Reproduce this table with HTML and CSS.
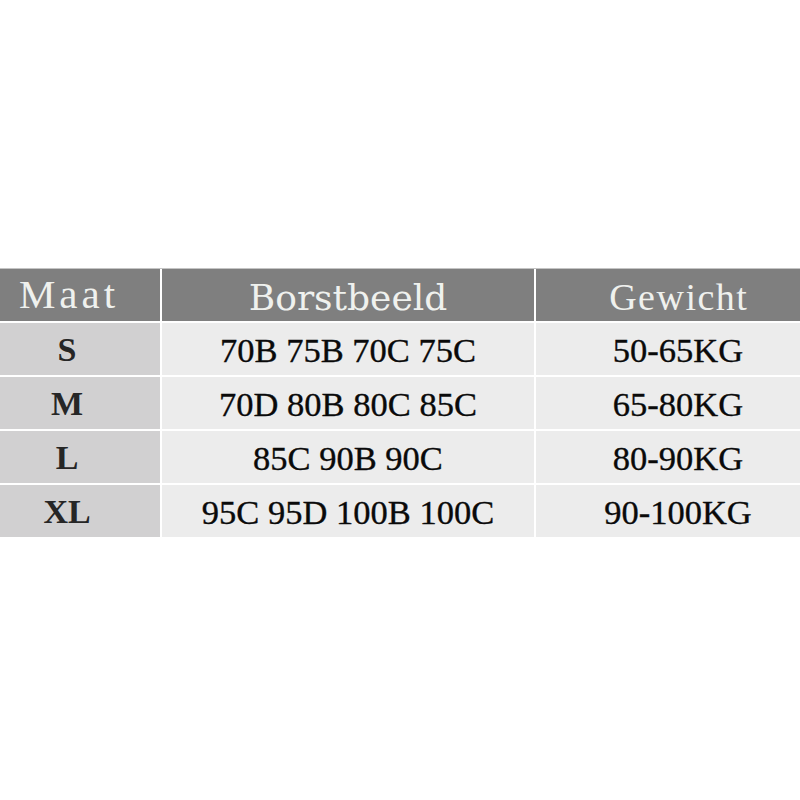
FILE: index.html
```html
<!DOCTYPE html>
<html>
<head>
<meta charset="utf-8">
<link rel="stylesheet" href="styles.css">
</head>
<body>
<div class="page">
  <div class="table">
    <div class="cell head c1"><span class="maat">Maat</span></div>
    <div class="cell head c2"><span class="borst">Borstbeeld</span></div>
    <div class="cell head c3"><span class="gew">Gewicht</span></div>

    <div class="cell size c1">S</div>
    <div class="cell body c2">70B 75B 70C 75C</div>
    <div class="cell body c3">50-65KG</div>

    <div class="cell size c1">M</div>
    <div class="cell body c2">70D 80B 80C 85C</div>
    <div class="cell body c3">65-80KG</div>

    <div class="cell size c1">L</div>
    <div class="cell body c2">85C 90B 90C</div>
    <div class="cell body c3">80-90KG</div>

    <div class="cell size c1">XL</div>
    <div class="cell body c2">95C 95D 100B 100C</div>
    <div class="cell body c3">90-100KG</div>
  </div>
</div>
</body>
</html>
```

FILE: styles.css
```css
html, body {
  margin: 0;
  padding: 0;
  background: #ffffff;
}
.page {
  width: 800px;
  height: 800px;
  padding-top: 268px;
  box-sizing: border-box;
  overflow: hidden;
}
.table {
  display: grid;
  grid-template-columns: 160px 372px 264px;
  grid-template-rows: 52px 52px 52px 52px 52px;
  column-gap: 2px;
  row-gap: 2px;
  border-top: 1px solid #c4c4c4;
  background: #ffffff;
}
.cell {
  display: flex;
  align-items: center;
  justify-content: center;
  font-family: "Liberation Serif", "Times New Roman", serif;
  line-height: 1;
  box-sizing: border-box;
}
.head {
  background: #7f7f7f;
  color: #eff1ee;
}
.c1 {
  padding-right: 26px;
}
.c3 {
  padding-left: 20px;
}
.maat {
  font-size: 41px;
  letter-spacing: 4px;
  margin-right: -4px;
  position: relative;
  top: -1px;
}
.borst {
  font-family: "DejaVu Serif", serif;
  font-size: 36px;
  position: relative;
  top: 3px;
}
.gew {
  font-family: "Liberation Serif", serif;
  font-size: 38px;
  letter-spacing: 1.5px;
  margin-right: -1.5px;
  position: relative;
  top: 2px;
}
.size {
  background: #d1d0d1;
  color: #262626;
  font-weight: bold;
  font-size: 34px;
  padding-top: 2px;
}
.body {
  background: #ececec;
  color: #0a0a0a;
  font-size: 34.5px;
  padding-top: 2px;
  -webkit-text-stroke: 0.35px #0a0a0a;
}
```
